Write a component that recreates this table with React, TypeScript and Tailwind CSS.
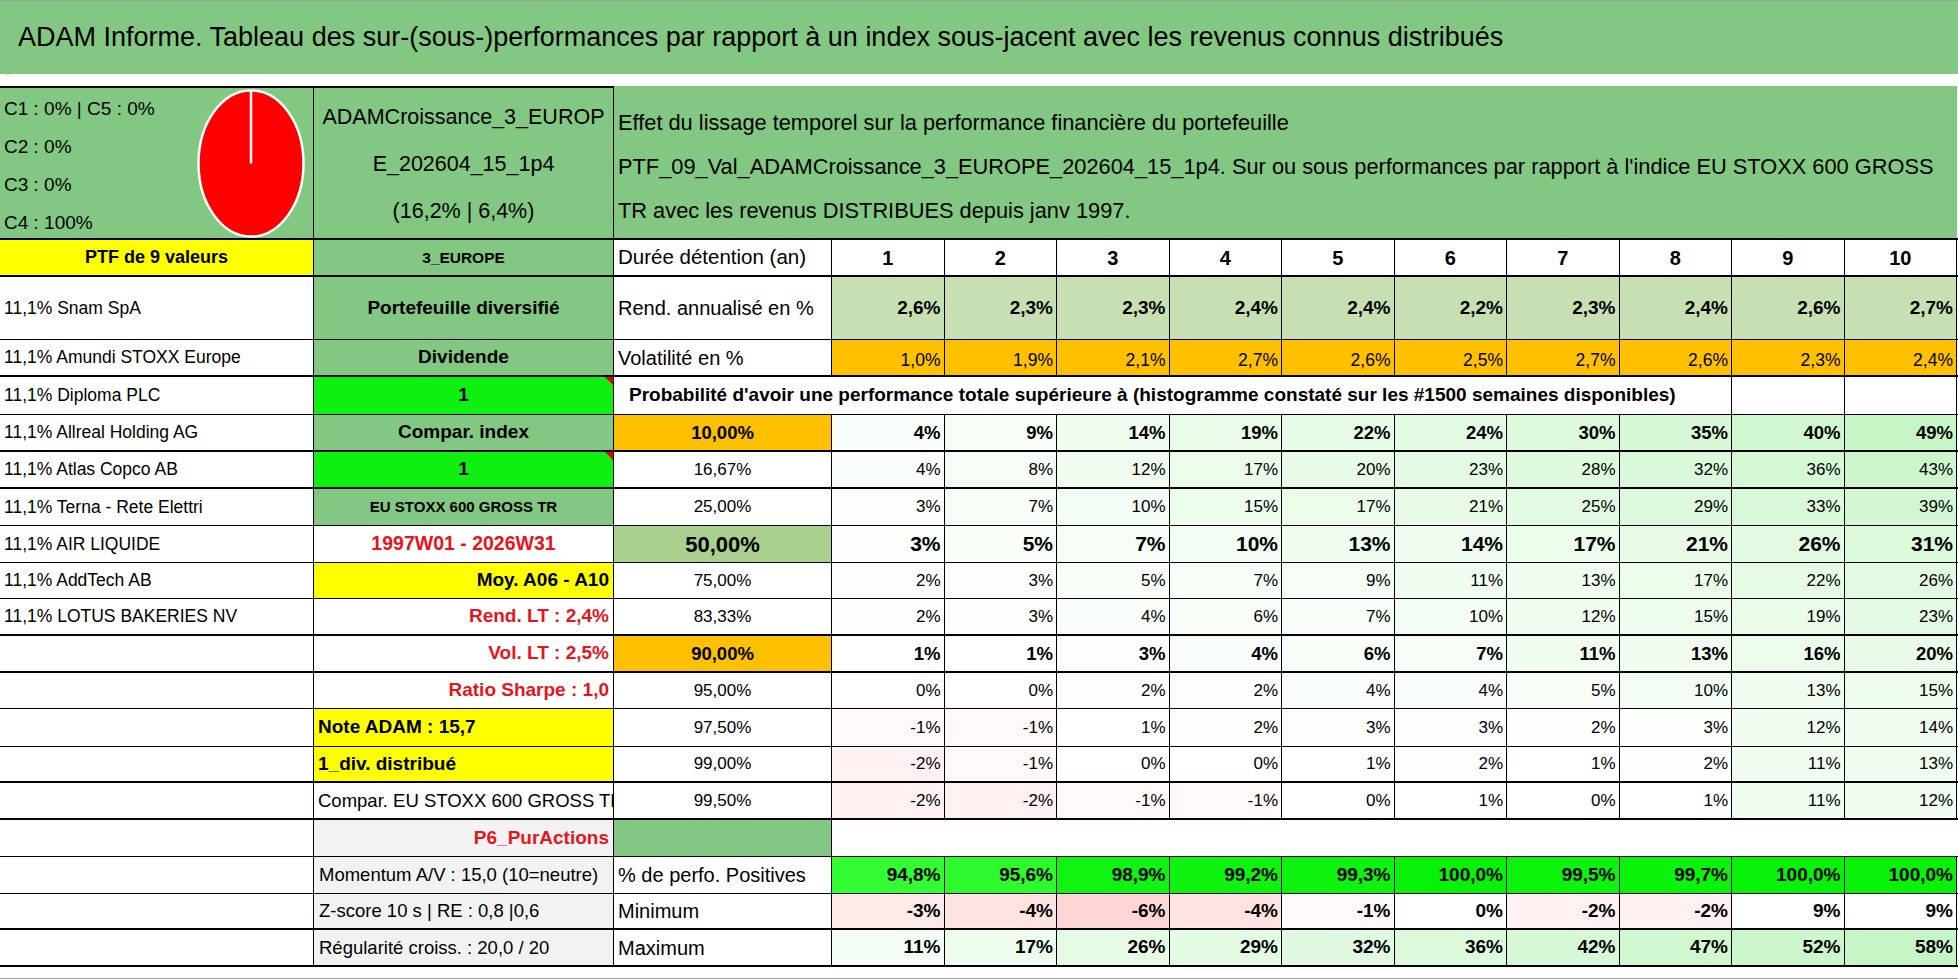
import React from "react";

// Coloured cells of the probability block (Excel-like colour scale)
function mix(from: number[], to: number[], t: number) {
  const c = from.map((f, i) => Math.round(f + (to[i] - f) * Math.max(0, Math.min(1, t))));
  return `rgb(${c[0]}, ${c[1]}, ${c[2]})`;
}

const WHITE = [255, 255, 255];
const SOFT_GREEN = [198, 245, 198];
const SOFT_RED = [255, 213, 213];

function scaleBg(v: number, max: number) {
  if (v < 0) return mix(WHITE, SOFT_RED, -v / 6);
  return mix(WHITE, SOFT_GREEN, v / max);
}

function positiveBg(v: number) {
  const t = (v - 94.8) / 5.2;
  return mix([51, 252, 51], [8, 242, 8], t);
}

function minBg(v: number) {
  if (v < 0) return mix(WHITE, SOFT_RED, -v / 6);
  return "#ffffff";
}

type CellProps = {
  className?: string;
  style?: React.CSSProperties;
  children?: React.ReactNode;
};

function Cell({ className = "", style, children }: CellProps) {
  return (
    <div
      className={`relative flex items-center overflow-hidden whitespace-nowrap border-r border-black ${className}`}
      style={style}
    >
      {children}
    </div>
  );
}

type RowProps = { className: string; children: React.ReactNode };

function Row({ className, children }: RowProps) {
  return (
    <div className={`grid grid-cols-[314px_300px_218px_repeat(10,112.5px)] border-black ${className}`}>
      {children}
    </div>
  );
}

function Flag() {
  return (
    <span className="absolute right-0 top-0 h-0 w-0 border-l-[8px] border-t-[8px] border-l-transparent border-t-[#e00000]" />
  );
}

function Pie() {
  return (
    <svg width="108" height="149" viewBox="0 0 108 149">
      <ellipse cx="54" cy="74.5" rx="52.5" ry="73" fill="#ff0000" stroke="#ffffff" strokeWidth="2.5" />
      <line x1="54" y1="74.5" x2="54" y2="1.5" stroke="#ffffff" strokeWidth="2.5" />
    </svg>
  );
}

const years = [1, 2, 3, 4, 5, 6, 7, 8, 9, 10];
const rend = ["2,6%", "2,3%", "2,3%", "2,4%", "2,4%", "2,2%", "2,3%", "2,4%", "2,6%", "2,7%"];
const vol = ["1,0%", "1,9%", "2,1%", "2,7%", "2,6%", "2,5%", "2,7%", "2,6%", "2,3%", "2,4%"];

const stocks = [
  "11,1% Snam SpA",
  "11,1% Amundi STOXX Europe",
  "11,1% Diploma PLC",
  "11,1% Allreal Holding AG",
  "11,1% Atlas Copco AB",
  "11,1% Terna - Rete Elettri",
  "11,1% AIR LIQUIDE",
  "11,1% AddTech AB",
  "11,1% LOTUS BAKERIES NV",
];

const positives = [94.8, 95.6, 98.9, 99.2, 99.3, 100.0, 99.5, 99.7, 100.0, 100.0];
const minimum = [-3, -4, -6, -4, -1, 0, -2, -2, 9, 9];
const maximum = [11, 17, 26, 29, 32, 36, 42, 47, 52, 58];

function fmt1(v: number) {
  return v.toFixed(1).replace(".", ",") + "%";
}

function ProbCells({ values, size }: { values: number[]; size: string }) {
  return (
    <>
      {values.map((v, i) => (
        <Cell key={i} className={`justify-end pr-[3px] ${size}`} style={{ backgroundColor: scaleBg(v, 49) }}>
          {v}%
        </Cell>
      ))}
    </>
  );
}

export default function App() {
  return (
    <div className="h-[979px] w-[1958px] overflow-hidden border-t border-b border-[#a0a0a0] bg-white font-['Liberation_Sans',Arial,sans-serif] text-black">
      {/* title */}
      <div className="flex h-[73px] items-center bg-[#82c882] pl-[18px] text-[27px]">
        ADAM Informe. Tableau des sur-(sous-)performances par rapport à un index sous-jacent avec les revenus connus distribués
      </div>
      <div className="flex h-[12px] items-start pl-[6px] text-[9px] leading-[9px] text-[#e0a020]">´´</div>

      {/* header block */}
      <Row className="h-[154px] border-b-2">
        <Cell className="justify-between border-t-2 bg-[#82c882] pl-[4px] pr-[8px]">
          <div className="flex flex-col pt-[6px] text-[19px] leading-[38px]">
            <span>C1 : 0% | C5 : 0%</span>
            <span>C2 : 0%</span>
            <span>C3 : 0%</span>
            <span>C4 : 100%</span>
          </div>
          <Pie />
        </Cell>
        <Cell className="flex-col justify-center border-t-2 bg-[#82c882] pt-[3px] text-center text-[21.5px] leading-[47px]">
          <span>ADAMCroissance_3_EUROP</span>
          <span>E_202604_15_1p4</span>
          <span>(16,2% | 6,4%)</span>
        </Cell>
        <Cell className="col-span-11 flex-col !items-start justify-center border-r-0 bg-[#82c882] pl-[4px] pt-[9px] text-[21.8px] leading-[44px]">
          <span>Effet du lissage temporel sur la performance financière du portefeuille</span>
          <span>
            PTF_09_Val_ADAMCroissance_3_EUROPE_202604_15_1p4. Sur ou sous performances par rapport à l'indice EU STOXX 600 GROSS
          </span>
          <span>TR avec les revenus DISTRIBUES depuis janv 1997.</span>
        </Cell>
      </Row>

      {/* durée */}
      <Row className="h-[37px] border-b-2">
        <Cell className="justify-center bg-[#ffff00] text-[18px] font-bold">PTF de 9 valeurs</Cell>
        <Cell className="justify-center bg-[#82c882] text-[15.5px] font-bold">3_EUROPE</Cell>
        <Cell className="pl-[4px] text-[20.5px]">Durée détention (an)</Cell>
        {years.map((y) => (
          <Cell key={y} className="justify-center text-[20px] font-bold">
            {y}
          </Cell>
        ))}
      </Row>

      {/* rendement */}
      <Row className="h-[63px] border-b">
        <Cell className="pl-[4px] text-[17.5px]">{stocks[0]}</Cell>
        <Cell className="justify-center bg-[#82c882] text-[19px] font-bold">Portefeuille diversifié</Cell>
        <Cell className="pl-[4px] text-[20px]">Rend. annualisé en %</Cell>
        {rend.map((v, i) => (
          <Cell key={i} className="justify-end bg-[#c6e0b4] pr-[3px] text-[19px] font-bold">
            {v}
          </Cell>
        ))}
      </Row>

      {/* volatilité */}
      <Row className="h-[37px] border-b-2">
        <Cell className="pl-[4px] text-[17.5px]">{stocks[1]}</Cell>
        <Cell className="justify-center bg-[#82c882] text-[19px] font-bold">Dividende</Cell>
        <Cell className="pl-[4px] text-[20px]">Volatilité en %</Cell>
        {vol.map((v, i) => (
          <Cell key={i} className="!items-end justify-end bg-[#ffc000] pb-[2px] pr-[3px] text-[17.5px]">
            {v}
          </Cell>
        ))}
      </Row>

      {/* probabilité */}
      <Row className="h-[38px] border-b">
        <Cell className="pl-[4px] text-[17.5px]">{stocks[2]}</Cell>
        <Cell className="justify-center bg-[#10f010] text-[19px] font-bold">
          1<Flag />
        </Cell>
        <Cell className="col-span-9 pl-[15px] text-[19px] font-bold">
          Probabilité d'avoir une performance totale supérieure à (histogramme constaté sur les #1500 semaines disponibles)
        </Cell>
        <Cell />
        <Cell />
      </Row>

      <Row className="h-[37px] border-b-2">
        <Cell className="pl-[4px] text-[17.5px]">{stocks[3]}</Cell>
        <Cell className="justify-center bg-[#82c882] text-[19px] font-bold">Compar. index</Cell>
        <Cell className="justify-center bg-[#ffc000] text-[18.5px] font-bold">10,00%</Cell>
        <ProbCells values={[4, 9, 14, 19, 22, 24, 30, 35, 40, 49]} size="text-[18.5px] font-bold" />
      </Row>

      <Row className="h-[37px] border-b-2">
        <Cell className="pl-[4px] text-[17.5px]">{stocks[4]}</Cell>
        <Cell className="justify-center bg-[#10f010] text-[19px] font-bold">
          1<Flag />
        </Cell>
        <Cell className="justify-center text-[17px]">16,67%</Cell>
        <ProbCells values={[4, 8, 12, 17, 20, 23, 28, 32, 36, 43]} size="text-[17px]" />
      </Row>

      <Row className="h-[37px] border-b">
        <Cell className="pl-[4px] text-[17.5px]">{stocks[5]}</Cell>
        <Cell className="justify-center bg-[#82c882] text-[15px] font-bold">EU STOXX 600 GROSS TR</Cell>
        <Cell className="justify-center text-[17px]">25,00%</Cell>
        <ProbCells values={[3, 7, 10, 15, 17, 21, 25, 29, 33, 39]} size="text-[17px]" />
      </Row>

      <Row className="h-[37px] border-b">
        <Cell className="pl-[4px] text-[17.5px]">{stocks[6]}</Cell>
        <Cell className="justify-center text-[19.5px] font-bold text-[#e8141c]">1997W01 - 2026W31</Cell>
        <Cell className="justify-center bg-[#a9d08e] text-[22px] font-bold">50,00%</Cell>
        <ProbCells values={[3, 5, 7, 10, 13, 14, 17, 21, 26, 31]} size="text-[21px] font-bold" />
      </Row>

      <Row className="h-[36px] border-b">
        <Cell className="pl-[4px] text-[17.5px]">{stocks[7]}</Cell>
        <Cell className="justify-end bg-[#ffff00] pr-[4px] text-[19px] font-bold">Moy. A06 - A10</Cell>
        <Cell className="justify-center text-[17px]">75,00%</Cell>
        <ProbCells values={[2, 3, 5, 7, 9, 11, 13, 17, 22, 26]} size="text-[17px]" />
      </Row>

      <Row className="h-[37px] border-b-2">
        <Cell className="pl-[4px] text-[17.5px]">{stocks[8]}</Cell>
        <Cell className="justify-end pr-[4px] text-[19px] font-bold text-[#e8141c]">Rend. LT : 2,4%</Cell>
        <Cell className="justify-center text-[17px]">83,33%</Cell>
        <ProbCells values={[2, 3, 4, 6, 7, 10, 12, 15, 19, 23]} size="text-[17px]" />
      </Row>

      <Row className="h-[37px] border-b-2">
        <Cell />
        <Cell className="justify-end pr-[4px] text-[19px] font-bold text-[#e8141c]">Vol. LT : 2,5%</Cell>
        <Cell className="justify-center bg-[#ffc000] text-[18.5px] font-bold">90,00%</Cell>
        <ProbCells values={[1, 1, 3, 4, 6, 7, 11, 13, 16, 20]} size="text-[18.5px] font-bold" />
      </Row>

      <Row className="h-[36px] border-b">
        <Cell />
        <Cell className="justify-end pr-[4px] text-[19px] font-bold text-[#e8141c]">Ratio Sharpe : 1,0</Cell>
        <Cell className="justify-center text-[17px]">95,00%</Cell>
        <ProbCells values={[0, 0, 2, 2, 4, 4, 5, 10, 13, 15]} size="text-[17px]" />
      </Row>

      <Row className="h-[38px] border-b">
        <Cell />
        <Cell className="bg-[#ffff00] pl-[4px] text-[19px] font-bold">Note ADAM : 15,7</Cell>
        <Cell className="justify-center text-[17px]">97,50%</Cell>
        <ProbCells values={[-1, -1, 1, 2, 3, 3, 2, 3, 12, 14]} size="text-[17px]" />
      </Row>

      <Row className="h-[36px] border-b-2">
        <Cell />
        <Cell className="bg-[#ffff00] pl-[4px] text-[19px] font-bold">1_div. distribué</Cell>
        <Cell className="justify-center text-[17px]">99,00%</Cell>
        <ProbCells values={[-2, -1, 0, 0, 1, 2, 1, 2, 11, 13]} size="text-[17px]" />
      </Row>

      <Row className="h-[37px] border-b-2">
        <Cell />
        <Cell className="pl-[4px] text-[18.5px]">Compar. EU STOXX 600 GROSS TR</Cell>
        <Cell className="justify-center text-[17px]">99,50%</Cell>
        <ProbCells values={[-2, -2, -1, -1, 0, 1, 0, 1, 11, 12]} size="text-[17px]" />
      </Row>

      {/* P6 */}
      <Row className="h-[37px] border-b">
        <Cell />
        <Cell className="justify-end bg-[#f2f2f2] pr-[4px] text-[19px] font-bold text-[#e8141c]">P6_PurActions</Cell>
        <Cell className="bg-[#82c882]" />
        <div className="col-span-10" />
      </Row>

      <Row className="h-[37px] border-b">
        <Cell />
        <Cell className="bg-[#f2f2f2] pl-[5px] text-[18.5px]">Momentum A/V : 15,0 (10=neutre)</Cell>
        <Cell className="pl-[4px] text-[20px]">% de perfo. Positives</Cell>
        {positives.map((v, i) => (
          <Cell key={i} className="justify-end pr-[3px] text-[19px] font-bold" style={{ backgroundColor: positiveBg(v) }}>
            {fmt1(v)}
          </Cell>
        ))}
      </Row>

      <Row className="h-[36px] border-b-2">
        <Cell />
        <Cell className="bg-[#f2f2f2] pl-[5px] text-[18.5px]">Z-score 10 s | RE : 0,8 |0,6</Cell>
        <Cell className="pl-[4px] text-[20px]">Minimum</Cell>
        {minimum.map((v, i) => (
          <Cell key={i} className="justify-end pr-[3px] text-[19px] font-bold" style={{ backgroundColor: minBg(v) }}>
            {v}%
          </Cell>
        ))}
      </Row>

      <Row className="h-[37px] border-b-2">
        <Cell />
        <Cell className="bg-[#f2f2f2] pl-[5px] text-[18.5px]">Régularité croiss. : 20,0 / 20</Cell>
        <Cell className="pl-[4px] text-[20px]">Maximum</Cell>
        {maximum.map((v, i) => (
          <Cell key={i} className="justify-end pr-[3px] text-[19px] font-bold" style={{ backgroundColor: scaleBg(v, 58) }}>
            {v}%
          </Cell>
        ))}
      </Row>
    </div>
  );
}
